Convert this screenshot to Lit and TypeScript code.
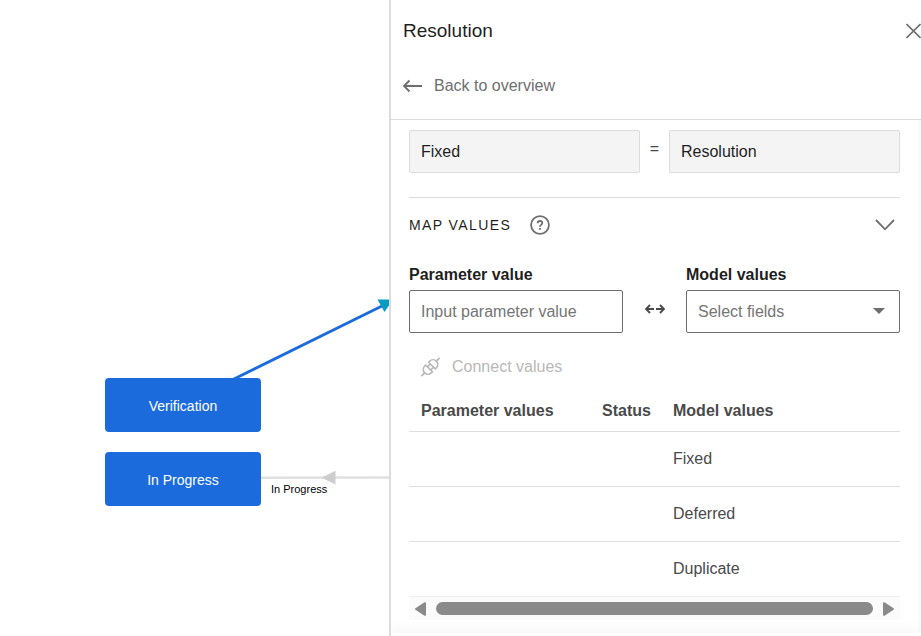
import { LitElement, html, svg, css } from 'lit';
import { customElement, property, state } from 'lit/decorators.js';

const font = css`
  :host {
    font-family: 'Liberation Sans', Arial, sans-serif;
    font-size: 16px;
    line-height: 20px;
    color: #1f1f1f;
  }
  * {
    box-sizing: border-box;
  }
`;

@customElement('workflow-canvas')
class WorkflowCanvas extends LitElement {
  static styles = [
    font,
    css`
      :host {
        display: block;
        position: relative;
        overflow: hidden;
        background: #fff;
      }
      .edges {
        position: absolute;
        left: 0;
        top: 0;
        width: 100%;
        height: 100%;
        overflow: visible;
      }
      .node {
        position: absolute;
        display: flex;
        align-items: center;
        justify-content: center;
        width: 156px;
        height: 54px;
        padding: 2px 0 0;
        border: 0;
        border-radius: 4px;
        background: #1b6bdd;
        color: #fff;
        font: inherit;
        font-size: 14px;
      }
      .verification {
        left: 105px;
        top: 378px;
      }
      .in-progress {
        left: 105px;
        top: 452px;
      }
      .edge-label {
        position: absolute;
        left: 271px;
        top: 482px;
        font-size: 11px;
        line-height: 14px;
        color: #000;
      }
    `,
  ];

  render() {
    return html`
      <svg class="edges" aria-hidden="true">
        ${svg`
          <line x1="232" y1="380" x2="386" y2="304" stroke="#1b6bdd" stroke-width="2.8" />
          <path d="M377.5 299.5H393L384.5 312Z" fill="#0a9bc4" />
          <line x1="261" y1="477.8" x2="392" y2="477.5" stroke="#e0e0e0" stroke-width="2.4" />
          <path d="M321.5 477.8L335.5 470.8V484.6Z" fill="#cdcdcd" />
        `}
      </svg>
      <button class="node verification">Verification</button>
      <button class="node in-progress">In Progress</button>
      <span class="edge-label">In Progress</span>
    `;
  }
}

@customElement('values-table')
class ValuesTable extends LitElement {
  @property({ type: Array }) values: string[] = [];

  static styles = [
    font,
    css`
      :host {
        display: block;
      }
      table {
        width: 100%;
        border-collapse: separate;
        border-spacing: 0;
        table-layout: fixed;
        color: #4a4a4a;
      }
      th,
      td {
        height: 55px;
        padding: 0 12px;
        border-bottom: 1px solid #dedede;
        text-align: left;
      }
      th {
        height: 42px;
        white-space: nowrap;
      }
      tr:last-child td {
        border-color: #efefef;
      }
      thead tr:last-child th {
        border-color: #dedede;
      }
      .parameter {
        width: 181px;
      }
      .status {
        width: 71px;
      }
      .scroller {
        display: flex;
        align-items: center;
        gap: 10px;
        height: 23px;
        padding: 0 6px;
        background: #fbfbfb;
      }
      .thumb {
        flex: 1;
        height: 13px;
        border-radius: 7px;
        background: #8a8a8a;
      }
      .step {
        display: flex;
        padding: 0;
        border: 0;
        background: none;
        color: #8a8a8a;
      }
      .step svg {
        width: 11px;
        height: 14px;
      }
    `,
  ];

  render() {
    return html`
      <table>
        <thead>
          <tr>
            <th class="parameter" scope="col">Parameter values</th>
            <th class="status" scope="col">Status</th>
            <th scope="col">Model values</th>
          </tr>
        </thead>
        <tbody>
          ${this.values.map(
            (value) => html`<tr>
              <td></td>
              <td></td>
              <td>${value}</td>
            </tr>`
          )}
        </tbody>
      </table>
      <div class="scroller">
        <button class="step" aria-label="Scroll left">
          <svg viewBox="0 0 11 14">
            <path
              d="M10 1.200L1 7l9 5.800Z"
              fill="currentColor"
              stroke="currentColor"
              stroke-width="2"
              stroke-linejoin="round"
            />
          </svg>
        </button>
        <div class="thumb"></div>
        <button class="step" aria-label="Scroll right">
          <svg viewBox="0 0 11 14">
            <path
              d="M1 1.200L10 7l-9 5.800Z"
              fill="currentColor"
              stroke="currentColor"
              stroke-width="2"
              stroke-linejoin="round"
            />
          </svg>
        </button>
      </div>
    `;
  }
}

@customElement('resolution-panel')
class ResolutionPanel extends LitElement {
  @state() private expanded = true;
  @state() private parameterValue = '';

  static styles = [
    font,
    css`
      :host {
        display: flex;
        flex-direction: column;
        border-left: 2px solid #dcdcdc;
        background: #fff;
      }
      svg {
        display: block;
        fill: none;
        stroke: currentColor;
      }
      button {
        display: flex;
        align-items: center;
        padding: 0;
        border: 0;
        background: none;
        color: #6e6e6e;
        font: inherit;
      }
      header {
        display: flex;
        flex-direction: column;
        gap: 34px;
        height: 120px;
        padding: 20px 0 0 12px;
        border-bottom: 1px solid #dcdcdc;
      }
      .title-row {
        display: flex;
        align-items: center;
        justify-content: space-between;
      }
      h1 {
        margin: 0;
        font-size: 19px;
        font-weight: 400;
        line-height: 22px;
      }
      .back {
        display: flex;
        align-items: center;
        gap: 12px;
        color: #6e6e6e;
        text-decoration: none;
      }
      .body {
        flex: 1;
        min-height: 0;
        overflow: hidden;
        padding: 10px 18px 0;
        border-right: 3px solid #fafafa;
      }
      .pair {
        display: grid;
        grid-template-columns: 1fr 29px 1fr;
        padding-bottom: 24px;
        border-bottom: 1px solid #dcdcdc;
      }
      .equals {
        padding-top: 9px;
        text-align: center;
        color: #4a4a4a;
      }
      input,
      select {
        display: block;
        width: 100%;
        height: 43px;
        padding: 0 11px;
        border: 1px solid #6e6e6e;
        border-radius: 2px;
        background: #fff;
        color: #1f1f1f;
        font: inherit;
        appearance: none;
      }
      input::placeholder,
      select {
        color: #757575;
        opacity: 1;
      }
      input[readonly] {
        border-color: #dcdcdc;
        background: #f4f4f4;
      }
      .section {
        display: flex;
        align-items: center;
        height: 54px;
        padding-right: 5px;
      }
      h2 {
        margin: 0 19px 0 0;
        font-size: 14px;
        font-weight: 400;
        letter-spacing: 0.1em;
      }
      .toggle {
        margin-left: auto;
      }
      .mapping {
        display: grid;
        grid-template-columns: 1fr 63px 1fr;
        align-items: end;
        padding-top: 13px;
      }
      label {
        display: block;
        margin-bottom: 5px;
        font-weight: 700;
      }
      .link {
        display: flex;
        align-items: center;
        justify-content: center;
        height: 48px;
        color: #4a4a4a;
      }
      .select {
        position: relative;
      }
      .caret {
        position: absolute;
        right: 15px;
        top: 18px;
        fill: #6e6e6e;
        stroke: none;
        pointer-events: none;
      }
      .connect {
        gap: 12px;
        height: 46px;
        margin-top: 11px;
        padding: 0 12px;
        color: #b8b8b8;
      }
      footer {
        position: relative;
        height: 3px;
        background: #fff;
        box-shadow: 0 0 14px rgba(0, 0, 0, 0.16);
        clip-path: inset(-16px 0 0 0);
      }
    `,
  ];

  handleInput(event: Event) {
    this.parameterValue = (event.target as HTMLInputElement).value;
  }

  handleToggle() {
    this.expanded = !this.expanded;
  }

  renderMapping() {
    return html`
      <div class="mapping">
        <div>
          <label for="parameter">Parameter value</label>
          <input
            id="parameter"
            type="text"
            placeholder="Input parameter value"
            .value="${this.parameterValue}"
            @input="${this.handleInput}"
          />
        </div>
        <div class="link">
          <svg width="20" height="12" viewBox="0 0 20 12" stroke-width="1.900">
            <path d="M9 6H1.500M5 2L1 6l4 4M11 6h7.500M15 2l4 4-4 4" />
          </svg>
        </div>
        <div>
          <label for="model">Model values</label>
          <div class="select">
            <select id="model">
              <option>Select fields</option>
            </select>
            <svg class="caret" width="12" height="6" viewBox="0 0 12 6">
              <path d="M0 0h12L6 6Z" />
            </svg>
          </div>
        </div>
      </div>
      <button class="connect" disabled>
        <svg width="19" height="20" viewBox="0 0 20 20" stroke-width="1.700">
          <path
            d="M8 5L15 12L16.200 10.800A4.950 4.950 0 0 0 9.200 3.800ZM16.200 3.800L19.600 0.400M5 8L12 15L10.800 16.200A4.950 4.950 0 0 1 3.800 9.200ZM3.800 16.200L0.400 19.600M6.800 9.800L9.800 6.800M10.200 13.200L13.200 10.200"
          />
        </svg>
        Connect values
      </button>
      <values-table .values="${['Fixed', 'Deferred', 'Duplicate']}"></values-table>
    `;
  }

  render() {
    return html`
      <header>
        <div class="title-row">
          <h1>Resolution</h1>
          <button aria-label="Close">
            <svg width="15" height="16" viewBox="0 0 15 16" stroke-width="1.700">
              <path d="M0.500 1l14 14M14.500 1l-14 14" />
            </svg>
          </button>
        </div>
        <a class="back" href="#">
          <svg width="19" height="14" viewBox="0 0 19 14" stroke-width="1.900">
            <path d="M19 7H1.500M6.500 1.500L1 7l5.500 5.500" />
          </svg>
          Back to overview
        </a>
      </header>
      <div class="body">
        <div class="pair">
          <input type="text" aria-label="Parameter" value="Fixed" readonly />
          <span class="equals">=</span>
          <input type="text" aria-label="Field" value="Resolution" readonly />
        </div>
        <div class="section">
          <h2>MAP VALUES</h2>
          <button aria-label="Help">
            <svg width="20" height="20" viewBox="0 0 20 20" stroke-width="1.800">
              <circle cx="10" cy="10" r="8.900" />
              <path d="M7.700 8.200Q7.700 6 10 6T12.300 8Q12.300 9 11.200 9.700Q10 10.400 10 11.700M10 13v1.700" />
            </svg>
          </button>
          <button class="toggle" aria-label="Toggle section" @click="${this.handleToggle}">
            <svg width="20" height="12" viewBox="0 0 20 12" stroke-width="1.800">
              <path d="M1 1l9 9.300L19 1" />
            </svg>
          </button>
        </div>
        ${this.expanded ? this.renderMapping() : ''}
      </div>
      <footer></footer>
    `;
  }
}

@customElement('app-root')
class AppRoot extends LitElement {
  static styles = css`
    :host {
      display: flex;
      height: 100vh;
      overflow: hidden;
    }
    workflow-canvas {
      flex: 1;
      min-width: 0;
    }
    resolution-panel {
      box-sizing: border-box;
      flex: 0 0 532px;
    }
  `;

  render() {
    return html`
      <workflow-canvas></workflow-canvas>
      <resolution-panel></resolution-panel>
    `;
  }
}
